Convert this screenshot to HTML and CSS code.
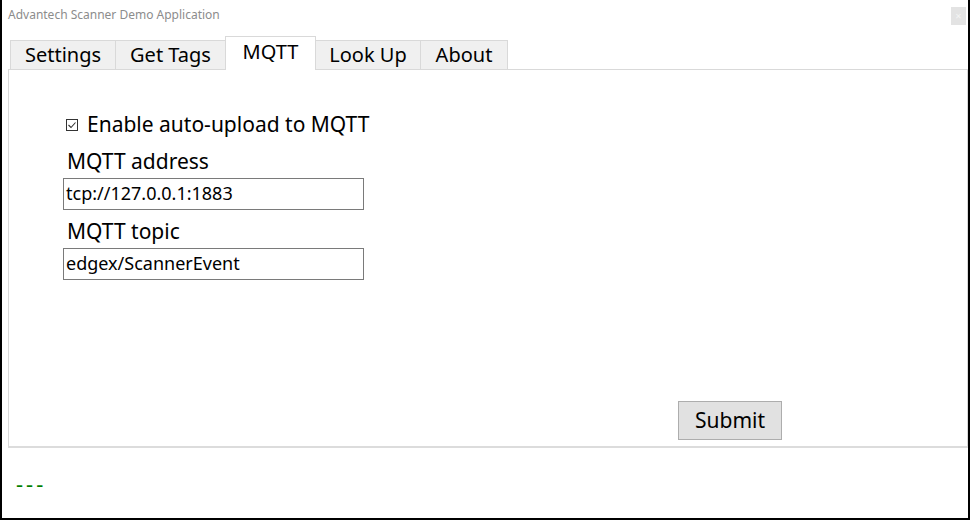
FILE: index.html
```html
<!DOCTYPE html>
<html>
<head>
<meta charset="utf-8">
<link rel="stylesheet" href="styles.css">
</head>
<body>
<div class="window">
  <div class="titlebar">
    <span class="title">Advantech Scanner Demo Application</span>
    <span class="close">×</span>
  </div>
  <div class="tabs">
    <div class="tab t1">Settings</div>
    <div class="tab t2">Get Tags</div>
    <div class="tab t3 active">MQTT</div>
    <div class="tab t4">Look Up</div>
    <div class="tab t5">About</div>
  </div>
  <div class="panel">
    <div class="form">
      <label class="check"><span class="box"><svg width="12" height="12" viewBox="0 0 12 12"><rect x="0.5" y="0.5" width="11" height="11" fill="#fff" stroke="#333"/><path d="M2.5 6 L5 8.5 L9.5 3.5" fill="none" stroke="#333" stroke-width="1.1"/></svg></span>Enable auto-upload to MQTT</label>
      <div class="label">MQTT address</div>
      <div class="input">tcp://127.0.0.1:1883</div>
      <div class="label">MQTT topic</div>
      <div class="input">edgex/ScannerEvent</div>
    </div>
    <div class="actions">
      <div class="button">Submit</div>
    </div>
  </div>
  <div class="status">---</div>
</div>
</body>
</html>
```
FILE: styles.css
```css
html, body {
  margin: 0;
  padding: 0;
  background: #fff;
}
.window {
  width: 970px;
  height: 520px;
  box-sizing: border-box;
  border-left: 2px solid #000;
  border-right: 2px solid #000;
  border-bottom: 2px solid #000;
  font-family: "Noto Sans", "Open Sans", sans-serif;
  color: #000;
  display: flex;
  flex-direction: column;
  overflow: hidden;
}
.titlebar {
  height: 30px;
  display: flex;
  justify-content: space-between;
  align-items: flex-start;
  padding-left: 6px;
  padding-right: 2px;
}
.title {
  font-size: 12px;
  color: #8c8c8c;
  margin-top: 6px;
}
.close {
  width: 15px;
  height: 18px;
  margin-top: 7px;
  background: #e3e3e3;
  color: #f4f4f4;
  font-size: 11px;
  line-height: 18px;
  text-align: center;
}
.tabs {
  display: flex;
  align-items: flex-end;
  height: 39px;
  padding-left: 8px;
  position: relative;
  z-index: 1;
}
.tab {
  height: 29px;
  box-sizing: border-box;
  background: #f0f0f0;
  border: 1px solid #d9d9d9;
  border-bottom: none;
  font-size: 20px;
  line-height: 28px;
  text-align: center;
  margin-right: -1px;
}
.t1 { width: 106px; }
.t2 { width: 111px; }
.t3 { width: 91px; }
.t4 { width: 106px; }
.t5 { width: 88px; }
.tab.active {
  height: 34px;
  background: #fff;
  line-height: 30px;
  margin-bottom: -1px;
}
.panel {
  margin: 0 0 0 6px;
  width: 960px;
  height: 379px;
  box-sizing: border-box;
  border: 1px solid #d9d9d9;
  border-bottom: 2px solid #dcdcdc;
  display: flex;
  flex-direction: column;
  justify-content: space-between;
  padding: 39px 0 6px 54px;
}
.form {
  display: flex;
  flex-direction: column;
  align-items: flex-start;
}
.check {
  display: flex;
  align-items: center;
  font-size: 21px;
  line-height: 30px;
  margin-left: 3px;
}
.box {
  display: inline-flex;
  width: 12px;
  height: 12px;
  margin-right: 9px;
  margin-top: 1px;
}
.label {
  font-size: 21px;
  line-height: 30px;
  margin-top: 7px;
  margin-left: 4px;
}
.input {
  width: 301px;
  height: 32px;
  box-sizing: border-box;
  border: 1px solid #7a7a7a;
  font-size: 18px;
  line-height: 29px;
  padding-left: 2px;
  margin-top: 2px;
}
.input + .label {
  margin-top: 6px;
}
.label + .input {
  margin-top: 2px;
}
.actions {
  display: flex;
  padding-left: 615px;
}
.button {
  width: 104px;
  height: 39px;
  box-sizing: border-box;
  background: #e1e1e1;
  border: 1px solid #adadad;
  font-size: 21px;
  line-height: 36px;
  text-align: center;
}
.status {
  font-size: 22px;
  color: #008000;
  margin-left: 14px;
  margin-top: 20px;
  letter-spacing: 3px;
  line-height: 30px;
}
```
